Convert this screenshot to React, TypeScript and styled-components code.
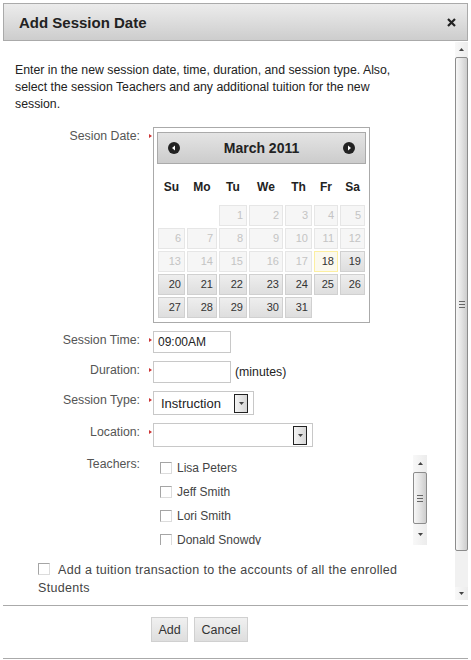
import React from "react";
import styled, { createGlobalStyle } from "styled-components";

const GlobalStyle = createGlobalStyle`
  body {
    margin: 0;
    background: #fff;
    font-family: "Liberation Sans", Arial, sans-serif;
  }
`;

const Dialog = styled.div`
  margin: 3px 0 0 3px;
  width: 465px;
  display: flex;
  flex-direction: column;
  color: #222;
`;

const TitleBar = styled.div`
  height: 36px;
  border: 1px solid #aaa;
  background: linear-gradient(#ececec, #cdcdcd);
  display: flex;
  align-items: center;
  justify-content: space-between;
  padding: 0 11px 0 15px;
`;

const Title = styled.span`
  font-size: 15px;
  font-weight: bold;
  color: #222;
`;

const Body = styled.div`
  height: 564px;
  display: flex;
`;

const Main = styled.div`
  flex: 1;
  padding: 21px 0 0 12px;
  overflow: hidden;
`;

const Intro = styled.p`
  margin: 0;
  width: 400px;
  font-size: 12.3px;
  line-height: 17px;
  color: #222;
`;

const Form = styled.div`
  margin-top: 14px;
`;

const Row = styled.div`
  display: grid;
  grid-template-columns: 125px 13px auto;
  align-items: start;
  margin-bottom: 8px;
`;

const Label = styled.div`
  text-align: right;
  padding-top: 1px;
  line-height: 17px;
  font-size: 12.3px;
  color: #555;
`;

const Required = styled.span<{ $show: boolean }>`
  display: block;
  width: 0;
  height: 0;
  margin: 7px 0 0 9px;
  border-left: 3px solid ${(p) => (p.$show ? "#cc3333" : "transparent")};
  border-top: 2.5px solid transparent;
  border-bottom: 2.5px solid transparent;
`;

/* calendar */

const Calendar = styled.div`
  width: 209px;
  border: 1px solid #aaa;
  padding: 4px 3px;
`;

const CalHeader = styled.div`
  height: 30px;
  border: 1px solid #aaa;
  background: linear-gradient(#e4e4e4, #cccccc);
  display: flex;
  align-items: center;
  justify-content: space-between;
  padding: 0 10px;
`;

const Month = styled.span`
  font-size: 14px;
  font-weight: bold;
  color: #222;
`;

const DayGrid = styled.div`
  display: grid;
  grid-template-columns: 27px 30px 28px 34px 27px 24px 25px;
  column-gap: 2px;
  row-gap: 2px;
  margin: 0 1px;
`;

const DayNames = styled(DayGrid)`
  margin: 12px 1px 7px;
  height: 22px;
`;

const DayName = styled.span`
  text-align: center;
  line-height: 22px;
  font-size: 12px;
  font-weight: bold;
  color: #222;
`;

const Cell = styled.span<{ $kind: "off" | "today" | "on" | "empty" }>`
  height: 19px;
  line-height: 19px;
  text-align: right;
  padding-right: 3px;
  font-size: 11px;
  border: 1px solid
    ${(p) =>
      p.$kind === "off" ? "#e6e6e6" : p.$kind === "today" ? "#fcefa1" : p.$kind === "on" ? "#d0d0d0" : "transparent"};
  background: ${(p) =>
    p.$kind === "off"
      ? "#f6f6f6"
      : p.$kind === "today"
      ? "#fbf9ee"
      : p.$kind === "on"
      ? "linear-gradient(#eeeeee, #dedede)"
      : "transparent"};
  color: ${(p) => (p.$kind === "off" ? "#c4c4c4" : "#333")};
`;

/* inputs */

const TextBox = styled.div`
  width: 72px;
  height: 20px;
  border: 1px solid #c8c8c8;
  padding-left: 4px;
  font-size: 12px;
  line-height: 20px;
  color: #222;
`;

const Inline = styled.div`
  display: flex;
  align-items: center;
  gap: 4px;
  font-size: 12.3px;
  color: #222;
`;

const Select = styled.div<{ $width: number }>`
  width: ${(p) => p.$width}px;
  height: 22px;
  border: 1px solid #c8c8c8;
  display: flex;
  align-items: center;
  justify-content: space-between;
  padding: 0 5px 0 7px;
  font-size: 13px;
  color: #222;
`;

const DropButton = styled.span`
  width: 12px;
  height: 17px;
  border: 1px solid #222;
  background: linear-gradient(to right, #f4f4f4, #d6d6d6);
  display: flex;
  align-items: center;
  justify-content: center;
`;

/* teachers list */

const ListBox = styled.div`
  width: 274px;
  height: 90px;
  display: flex;
`;

const List = styled.div`
  flex: 1;
  padding: 1px 0 0 7px;
  overflow: hidden;
`;

const ListItem = styled.div`
  height: 24px;
  display: flex;
  align-items: center;
  gap: 5px;
  font-size: 12px;
  color: #444;
`;

const Check = styled.span`
  display: inline-block;
  flex: none;
  width: 10px;
  height: 10px;
  border: 1px solid #a5a5a5;
  border-right-color: #dcdcdc;
  border-bottom-color: #dcdcdc;
  background: #fff;
`;

const Tuition = styled.p`
  margin: 16px 0 0;
  padding-left: 23px;
  width: 400px;
  font-size: 12.5px;
  line-height: 18px;
  color: #444;
  letter-spacing: 0.3px;
  ${Check} {
    margin-right: 8px;
    vertical-align: -1px;
  }
`;

/* scrollbars */

const ScrollBar = styled.div<{ $outer?: boolean }>`
  width: ${(p) => (p.$outer ? 13 : 14)}px;
  display: flex;
  flex-direction: column;
  background: #f3f3f3;
  margin: ${(p) => (p.$outer ? "1px 0 5px" : "0")};
`;

const ArrowZone = styled.div<{ $h: number }>`
  height: ${(p) => p.$h}px;
  flex: none;
  display: flex;
  align-items: center;
  justify-content: center;
  background: linear-gradient(to right, #f8f8f8, #ececec);
`;

const Thumb = styled.div<{ $h: number }>`
  height: ${(p) => p.$h - 2}px;
  flex: none;
  border: 1px solid #8c8c8c;
  border-radius: 2px;
  background: linear-gradient(to right, #f7f7f7, #e6e6e6 45%, #cdcdcd);
  display: flex;
  align-items: center;
  justify-content: center;
`;

const Track = styled.div`
  flex: 1;
  background: #f1f1f1;
`;

const Footer = styled.div`
  height: 54px;
  border-top: 1px solid #aaa;
  border-bottom: 1px solid #aaa;
  padding: 11px 0 0 148px;
  box-sizing: border-box;
  display: flex;
  align-items: flex-start;
  gap: 6px;
`;

const Button = styled.button<{ $w: number }>`
  width: ${(p) => p.$w}px;
  height: 25px;
  border: 1px solid #d0d0d0;
  background: linear-gradient(#f0f0f0, #dedede);
  font-family: inherit;
  font-size: 12.5px;
  color: #333;
  padding: 0;
`;

function Arrow({ up }: { up?: boolean }) {
  return (
    <svg width="5" height="3" viewBox="0 0 5 3">
      <polygon points={up ? "0,3 5,3 2.5,0" : "0,0 5,0 2.5,3"} fill="#444" />
    </svg>
  );
}

function Grip() {
  return (
    <svg width="6" height="7" viewBox="0 0 6 7">
      <path d="M0 0.5H6M0 3.5H6M0 6.5H6" stroke="#666" strokeWidth="1" />
    </svg>
  );
}

function Scroll({ outer, up, thumb, down }: { outer?: boolean; up: number; thumb: number; down: number }) {
  return (
    <ScrollBar $outer={outer}>
      <ArrowZone $h={up}>
        <Arrow up />
      </ArrowZone>
      <Thumb $h={thumb}>
        <Grip />
      </Thumb>
      <Track />
      <ArrowZone $h={down}>
        <Arrow />
      </ArrowZone>
    </ScrollBar>
  );
}

function NavIcon({ next }: { next?: boolean }) {
  return (
    <svg width="12" height="12" viewBox="0 0 12 12">
      <circle cx="6" cy="6" r="6" fill="#222" />
      <polygon points={next ? "5,3.5 8,6 5,8.5" : "7,3.5 4,6 7,8.5"} fill="#fff" />
    </svg>
  );
}

const dayNames = ["Su", "Mo", "Tu", "We", "Th", "Fr", "Sa"];
const teachers = ["Lisa Peters", "Jeff Smith", "Lori Smith", "Donald Snowdy"];

function DatePicker() {
  const cells: { n: number | null }[] = [];
  for (let i = 0; i < 2; i++) cells.push({ n: null });
  for (let d = 1; d <= 31; d++) cells.push({ n: d });
  return (
    <Calendar>
      <CalHeader>
        <NavIcon />
        <Month>March 2011</Month>
        <NavIcon next />
      </CalHeader>
      <DayNames>
        {dayNames.map((d) => (
          <DayName key={d}>{d}</DayName>
        ))}
      </DayNames>
      <DayGrid>
        {cells.map((c, i) =>
          c.n === null ? (
            <Cell key={i} $kind="empty" />
          ) : (
            <Cell key={i} $kind={c.n < 18 ? "off" : c.n === 18 ? "today" : "on"}>
              {c.n}
            </Cell>
          )
        )}
      </DayGrid>
    </Calendar>
  );
}

export default function App() {
  return (
    <>
      <GlobalStyle />
      <Dialog>
        <TitleBar>
          <Title>Add Session Date</Title>
          <svg width="9" height="9" viewBox="0 0 9 9">
            <path d="M1 1L8 8M8 1L1 8" stroke="#222" strokeWidth="2.2" />
          </svg>
        </TitleBar>
        <Body>
          <Main>
            <Intro>
              Enter in the new session date, time, duration, and session type. Also, select the session Teachers
              and any additional tuition for the new session.
            </Intro>
            <Form>
              <Row>
                <Label>Sesion Date:</Label>
                <Required $show />
                <DatePicker />
              </Row>
              <Row>
                <Label>Session Time:</Label>
                <Required $show />
                <TextBox>09:00AM</TextBox>
              </Row>
              <Row>
                <Label>Duration:</Label>
                <Required $show />
                <Inline>
                  <TextBox />
                  (minutes)
                </Inline>
              </Row>
              <Row>
                <Label>Session Type:</Label>
                <Required $show />
                <Select $width={87}>
                  Instruction
                  <DropButton>
                    <Arrow />
                  </DropButton>
                </Select>
              </Row>
              <Row>
                <Label>Location:</Label>
                <Required $show />
                <Select $width={146}>
                  <span />
                  <DropButton>
                    <Arrow />
                  </DropButton>
                </Select>
              </Row>
              <Row>
                <Label>Teachers:</Label>
                <Required $show={false} />
                <ListBox>
                  <List>
                    {teachers.map((t) => (
                      <ListItem key={t}>
                        <Check />
                        {t}
                      </ListItem>
                    ))}
                  </List>
                  <Scroll up={17} thumb={52} down={21} />
                </ListBox>
              </Row>
            </Form>
            <Tuition>
              <Check />
              Add a tuition transaction to the accounts of all the enrolled Students
            </Tuition>
          </Main>
          <Scroll outer up={15} thumb={494} down={13} />
        </Body>
        <Footer>
          <Button $w={37}>Add</Button>
          <Button $w={54}>Cancel</Button>
        </Footer>
      </Dialog>
    </>
  );
}
